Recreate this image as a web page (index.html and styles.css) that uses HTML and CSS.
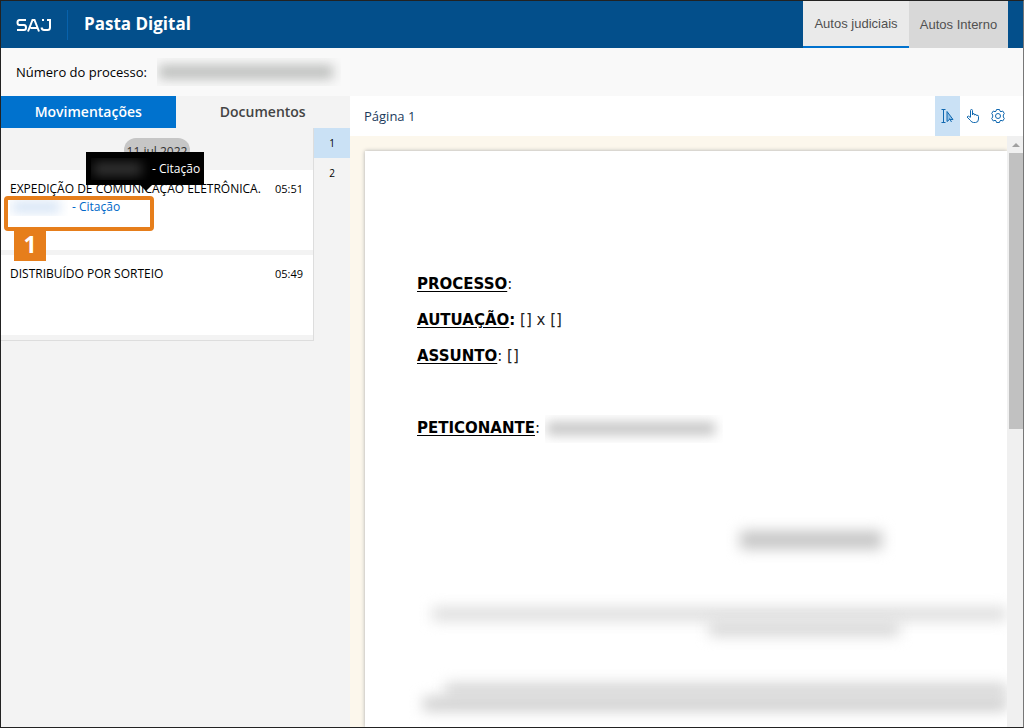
FILE: index.html
```html
<!DOCTYPE html>
<html lang="pt-BR">
<head>
<meta charset="utf-8">
<title>Pasta Digital</title>
<link rel="stylesheet" href="styles.css">
</head>
<body>
<div class="app">
  <header class="topbar">
    <svg class="logo" viewBox="0 0 36 14" role="img" aria-label="SAJ">
      <path d="M10 2H3.5Q1.500 2 1.500 4.500T3.500 7H8Q10 7 10 9.500T8 12H1M12 13.500 16.500 2H18.500L23 13.500M14.500 10H21M26 2H28M31 2H34V9.500Q34 12 31.500 12H28Q26 12 25.500 9.500"/>
    </svg>
    <h1 class="title">Pasta Digital</h1>
    <nav class="views">
      <button class="view view-active" type="button">Autos judiciais</button>
      <button class="view" type="button">Autos Interno</button>
    </nav>
  </header>
  <div class="process"><span>Número do processo:</span><span class="masked masked-number"><i class="smudge"></i></span></div>
  <main class="workspace">
    <aside class="sidebar">
      <nav class="tabs">
        <button class="tab tab-active" type="button">Movimentações</button>
        <button class="tab" type="button">Documentos</button>
      </nav>
      <div class="side-body">
        <section class="timeline">
          <div class="date-row"><span class="date">11 jul 2022</span></div>
          <article class="event event-noted">
            <div class="event-head"><span>EXPEDIÇÃO DE COMUNICAÇÃO ELETRÔNICA.</span><time>05:51</time></div>
            <a class="event-link" href="#"><span class="masked masked-link"><i class="smudge"></i></span>- Citação</a>
            <div class="highlight"></div>
            <b class="step">1</b>
            <div class="tooltip" role="tooltip"><span class="masked masked-tip"><i class="smudge"></i></span>- Citação</div>
          </article>
          <article class="event">
            <div class="event-head"><span>DISTRIBUÍDO POR SORTEIO</span><time>05:49</time></div>
          </article>
        </section>
        <nav class="pages">
          <button class="page-number page-current" type="button">1</button>
          <button class="page-number" type="button">2</button>
        </nav>
      </div>
    </aside>
    <section class="viewer">
      <div class="toolbar">
        <span class="page-label">Página 1</span>
        <button class="tool tool-active" type="button" aria-label="Selecionar texto">
          <svg viewBox="0 0 16 16"><path d="M1.500 1.500H5.500M1.500 14.500H5.500M3.500 1.500V14.500"/><path class="tint" d="M7 3.500V13.500L9.500 11.500H13Z"/><path d="M9.500 10.500 11.500 14"/></svg>
        </button>
        <button class="tool" type="button" aria-label="Mover">
          <svg viewBox="0 0 16 16"><path d="M5.500 9V2.500Q5.500 1.500 6.500 1.500T7.500 2.500V7M7.500 6Q9.500 4.500 9.500 7Q11.500 5.500 11.500 7.500Q13.500 6.500 13.500 8.500V11Q13.500 14.500 10.500 14.500H8.500Q6.500 14.500 5.500 12.500L2 9Q3 7 5.500 9.500"/></svg>
        </button>
        <button class="tool" type="button" aria-label="Configurações">
          <svg viewBox="0 0 16 16"><circle cx="8" cy="8" r="2.500"/><path d="M6.500 1.500H9.500L10 3.200 11 3.700 12.700 3 14.300 5.500 13.300 7V9L14.300 10.500 12.700 13 11 12.300 10 12.800 9.500 14.500H6.500L6 12.800 5 12.300 3.300 13 1.700 10.500 2.700 9V7L1.700 5.500 3.300 3 5 3.700 6 3.200Z"/></svg>
        </button>
      </div>
      <div class="canvas">
        <div class="sheet-area">
          <article class="sheet">
            <p class="field"><b><u>PROCESSO</u></b>:</p>
            <p class="field"><b><u>AUTUAÇÃO</u>:</b> [] x []</p>
            <p class="field"><b><u>ASSUNTO</u></b>: []</p>
            <p class="field field-last"><b><u>PETICONANTE</u></b>: <span class="masked masked-name"><i class="smudge"></i></span></p>
            <div class="blur-text blur-heading"></div>
            <div class="blur-text blur-line"></div>
            <div class="blur-text blur-short"></div>
            <div class="blur-text blur-body"></div>
            <div class="blur-text blur-body-wide"></div>
          </article>
        </div>
        <div class="scrollbar"><span class="scroll-arrow"></span><span class="scroll-thumb"></span></div>
      </div>
    </section>
  </main>
</div>
</body>
</html>
```
FILE: styles.css
```css
* { box-sizing: border-box; }
body { margin: 0; font-family: "Open Sans", "Noto Sans", sans-serif; font-size: 12px; color: #000; }
button { border: 0; padding: 0; margin: 0; background: none; font: inherit; color: inherit; }
.app { height: 100vh; display: flex; flex-direction: column; border: 1px solid #222; border-right-color: #777; background: #f3f3f3; overflow: hidden; }

.topbar { flex: none; height: 47px; display: flex; align-items: center; background: #034f8b; color: #fff; padding: 0 15px 0 14px; }
.logo { width: 38px; height: 14px; fill: none; stroke: #fff; stroke-width: 2; }
.title { margin: 0 auto 0 14px; padding: 0 0 2px 16px; border-left: 1px solid #0862ac; font-size: 17px; line-height: 28px; font-weight: 700; }
.views { display: flex; align-self: stretch; }
.view { padding: 0 10px; background: #d8d8d8; color: #505050; font-family: "Liberation Sans", Arial, sans-serif; font-size: 13px; min-width: 99px; }
.view-active { min-width: 106px; background: #eaeaea; border-bottom: 2px solid #0072ce; }

.process { flex: none; height: 48px; display: flex; align-items: center; gap: 5px; padding: 0 15px; background: #f9f9f9; font-size: 13px; }
.process > :first-child { min-width: 136px; }
.masked { display: inline-flex; align-items: center; overflow: hidden; vertical-align: middle; }
.smudge { flex: 1; height: 10px; margin: 0 8px 0 2px; background: #ccc; filter: blur(6px); }
.masked-number { width: 184px; height: 28px; }
.masked-number .smudge { height: 14px; background: #bcbebc; }

.workspace { flex: 1; min-height: 0; display: flex; }
.sidebar { flex: none; width: 349px; }
.tabs { display: flex; height: 32px; }
.tab { flex: 1; padding-bottom: 1px; color: #444; font-weight: 600; font-size: 14px; }
.tab-active { background: #0072ce; color: #fff; }
.side-body { display: flex; align-items: flex-start; }
.timeline { flex: 1; border: solid #ddd; border-width: 0 1px 1px 0; }
.date-row { height: 42px; padding-top: 10px; text-align: center; }
.date { display: inline-block; height: 24px; line-height: 28px; padding: 0 3px; border-radius: 12px; background: #c6c6c6; color: #333; }
.event { position: relative; height: 85px; padding: 10px 10px 0 9px; background: #fff; border-bottom: 5px solid #f3f3f3; }
.event-noted { z-index: 1; }
.event-head { display: flex; justify-content: space-between; line-height: 18px; white-space: nowrap; }
.event-head time { font-size: 11px; }
.event-link { display: flex; align-items: center; gap: 4px; line-height: 18px; color: #0068c8; text-decoration: none; }
.masked-link { width: 58px; height: 18px; }
.masked-link .smudge { background: #cfe0f4; }
.highlight { position: absolute; left: 3px; top: 26px; width: 150px; height: 35px; border: 4px solid #e67e1b; border-radius: 4px; }
.step { position: absolute; left: 13px; top: 59px; width: 32px; height: 32px; background: #e67e1b; color: #fff; font-size: 23px; line-height: 31px; text-align: center; }
.tooltip { position: absolute; left: 85px; top: -18px; width: 118px; height: 33px; display: flex; align-items: center; gap: 2px; padding-left: 5px; background: #000; color: #fff; white-space: nowrap; }
.tooltip::after { content: ""; position: absolute; left: 54px; top: 33px; border: solid transparent; border-width: 6px 6px 0; border-top-color: #000; }
.masked-tip { width: 59px; height: 22px; }
.masked-tip .smudge { height: 14px; background: #333; }
.pages { width: 36px; }
.page-number { display: block; width: 36px; height: 30px; font-size: 10px; }
.page-current { background: #cae1f5; }

.viewer { flex: 1; min-width: 0; display: flex; flex-direction: column; }
.toolbar { flex: none; height: 40px; display: flex; padding: 0 13px 0 14px; background: #fff; }
.page-label { margin-right: auto; line-height: 40px; font-size: 13px; color: #1b3a5c; }
.tool { width: 25px; display: grid; place-items: center; }
.tool-active { background: #cae1f5; }
.tool svg { width: 16px; height: 16px; fill: none; stroke: #1068b0; stroke-width: 1; }
.tool .tint { fill: #8fbfe6; }
.canvas { flex: 1; min-height: 0; display: flex; }
.sheet-area { flex: 1; min-width: 0; overflow: hidden; padding: 15px 0 0 15px; background: #fcf7ec; }
.sheet { height: 100%; padding: 115px 0 0 52px; background: #fff; box-shadow: 0 0 4px #aaa; font-family: "DejaVu Sans", sans-serif; font-size: 15px; overflow: hidden; }
.field { margin: 0; height: 36px; line-height: 36px; color: #222; white-space: nowrap; }
.field b { color: #000; }
.field u { text-underline-offset: 2px; }
.field-last { margin-top: 36px; }
.masked-name { width: 178px; height: 28px; }
.masked-name .smudge { height: 13px; background: #c4c4c4; }
.blur-text { filter: blur(7px); background: #d6d6d6; height: 14px; }
.blur-heading { width: 142px; height: 18px; margin: 85px 0 0 323px; background: #c5c5c5; }
.blur-line { margin: 58px 0 0 15px; background: #dedede; }
.blur-short { width: 190px; margin: 1px 0 0 292px; }
.blur-body { margin: 47px 0 0 28px; }
.blur-body-wide { margin-left: 6px; background: #cecece; }
.scrollbar { flex: none; width: 16px; padding-left: 2px; background: #f0f0f0; }
.scroll-arrow { display: block; height: 17px; padding: 7px 0 0 3px; }
.scroll-arrow::before { content: ""; display: block; width: 0; border: solid transparent; border-width: 0 4px 4px; border-bottom-color: #a0a0a0; }
.scroll-thumb { display: block; height: 276px; background: #c1c1c1; }
```
